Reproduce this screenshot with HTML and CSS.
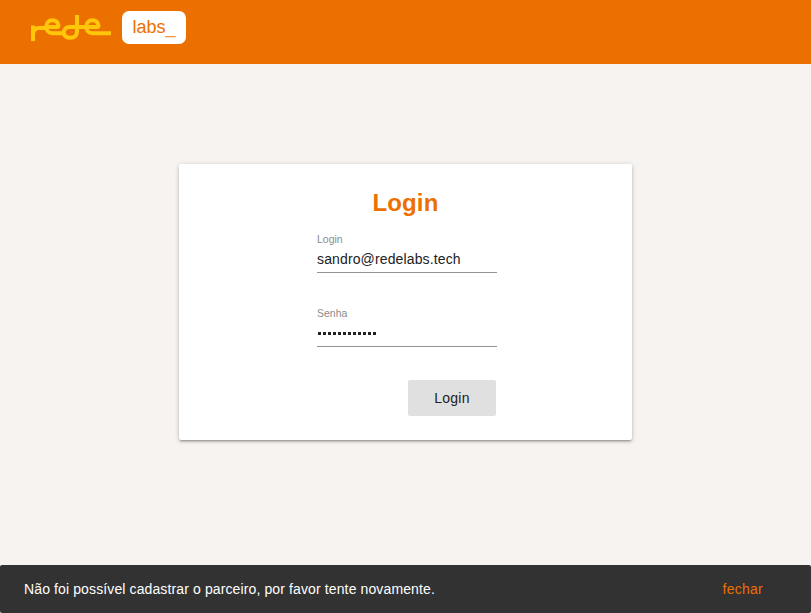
FILE: index.html
```html
<!DOCTYPE html>
<html lang="pt-BR">
<head>
<meta charset="utf-8">
<title>Login</title>
<link rel="stylesheet" href="styles.css">
</head>
<body>
<header class="topbar">
  <svg class="logo" width="82" height="30" viewBox="30 13 82 30" fill="none" stroke="#ffc60a" stroke-width="4">
    <path d="M33 41V25.5M33 35Q33 28 39 28H43C46 28 46.5 27 49 27H57.5Q58.6 26.8 58.4 25.4C57.8 22 55.8 20.3 52.6 20.3C48.7 20.3 46.3 23 46.3 26.7C46.3 30.5 48.6 33.2 52.5 33.2H63"/>
    <path d="M77 15V31.5C77 35.6 74.4 37.8 70.4 37.8C66.4 37.8 63.8 35.8 63.8 32.5C63.8 29.3 66 27 69.5 27H97.5Q98.6 26.8 98.4 25.4C97.8 22 95.8 20.3 92.6 20.3C88.7 20.3 86.3 23 86.3 26.7C86.3 30.5 88.6 33.2 92.5 33.2H111"/>
  </svg>
  <span class="labs">labs<span class="cursor">_</span></span>
</header>
<main class="content">
  <form class="card">
    <h1 class="title">Login</h1>
    <div class="fields">
      <label class="field"><span class="label">Login</span><input class="input" type="text" value="sandro@redelabs.tech"></label>
      <label class="field"><span class="label">Senha</span><span class="input password"><i></i><i></i><i></i><i></i><i></i><i></i><i></i><i></i><i></i><i></i><i></i><i></i></span></label>
      <button class="submit" type="button">Login</button>
    </div>
  </form>
</main>
<footer class="toast"><span class="message">Não foi possível cadastrar o parceiro, por favor tente novamente.</span><a class="close">fechar</a></footer>
</body>
</html>
```
FILE: styles.css
```css
* { box-sizing: border-box; }
body {
  margin: 0;
  height: 613px;
  display: flex;
  flex-direction: column;
  overflow: hidden;
  background: #f7f3f0;
  font-family: "Liberation Sans", Arial, sans-serif;
  font-size: 14px;
  color: #212121;
}
.topbar {
  height: 64px;
  flex: none;
  display: flex;
  align-items: flex-start;
  background: #ec7000;
  padding: 11px 30px 0;
}
.logo { margin-top: 2px; }
.labs {
  width: 64px;
  height: 33px;
  margin-left: 10px;
  border-radius: 7px;
  background: #fff;
  color: #ec7000;
  font-size: 18px;
  line-height: 32px;
  text-align: center;
}
.cursor { opacity: .75; }
.content { flex: 1; padding-top: 100px; }
.card {
  width: 453px;
  height: 276px;
  margin: 0 auto;
  padding-top: 24px;
  background: #fff;
  border-radius: 2px;
  box-shadow: 0 1px 5px rgba(0,0,0,.2), 0 2px 2px rgba(0,0,0,.14), 0 3px 1px -2px rgba(0,0,0,.12);
}
.title {
  margin: 0;
  text-align: center;
  font-size: 24px;
  line-height: 30px;
  letter-spacing: .1px;
  color: #ec7000;
}
.fields {
  width: 180px;
  margin: 14px 0 0 138px;
  display: flex;
  flex-direction: column;
}
.field { display: block; height: 74px; }
.label { display: block; height: 15px; line-height: 14px; font-size: 10.5px; color: #8c8c8c; }
.input {
  display: block;
  width: 180px;
  height: 26px;
  border: 0;
  border-bottom: 1px solid #949494;
  outline: 0;
  padding: 0 0 1px;
  background: transparent;
  font: inherit;
  color: #212121;
  letter-spacing: .13px;
}
.password { display: flex; align-items: center; gap: 2px; padding-left: 1px; }
.password i { width: 3px; height: 3px; background: #212121; }
.submit {
  align-self: flex-end;
  width: 88px;
  height: 36px;
  margin: 0 1px 0 0;
  border: 0;
  border-radius: 2px;
  background: #e0e0e0;
  color: #212121;
  font: inherit;
  letter-spacing: .2px;
}
.toast {
  height: 48px;
  flex: none;
  display: flex;
  align-items: center;
  justify-content: space-between;
  padding: 0 48px 0 24px;
  border-radius: 2px;
  background: #323232;
  color: #fff;
  letter-spacing: .12px;
}
.close { color: #ec7000; letter-spacing: .25px; }
```
